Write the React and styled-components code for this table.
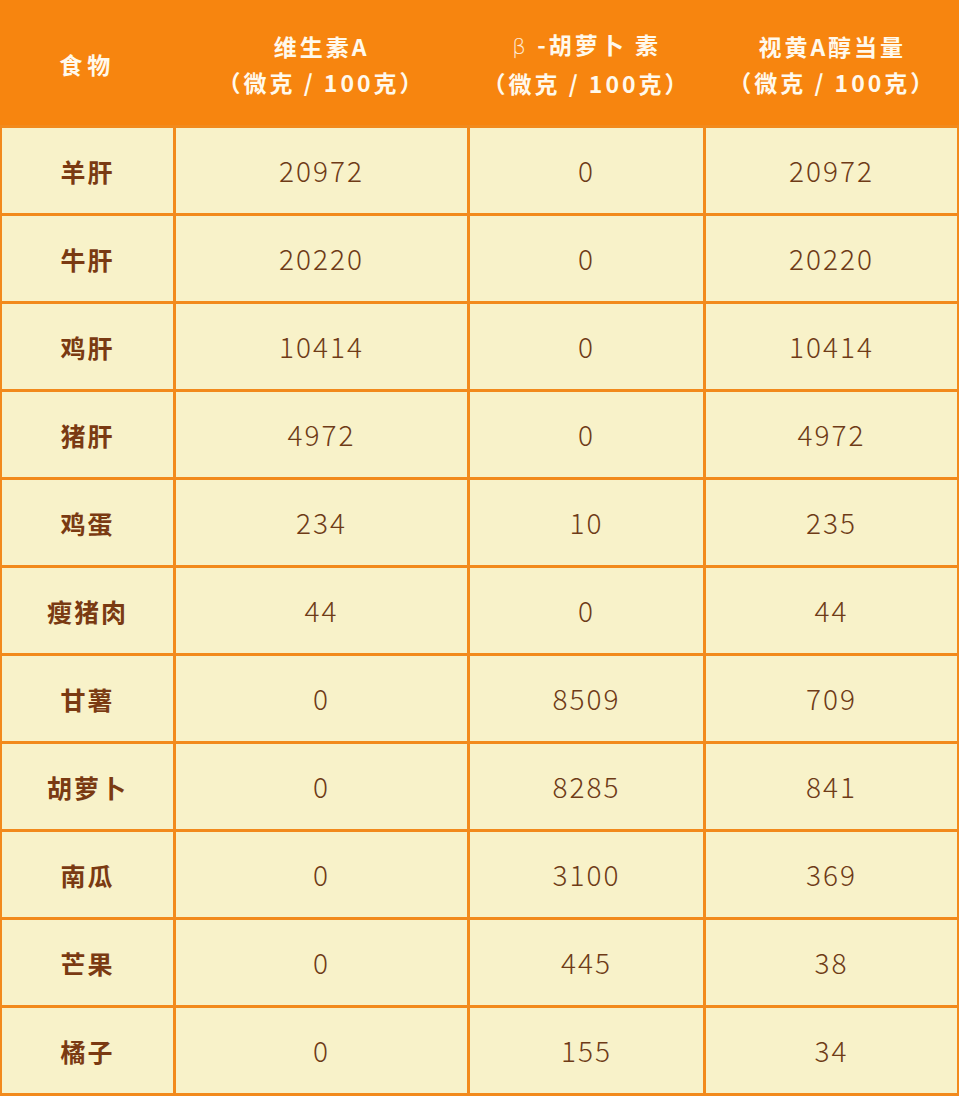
import React from "react";
import styled, { createGlobalStyle } from "styled-components";

const Global = createGlobalStyle`
  html, body { margin: 0; padding: 0; background: #f8f2c9; }
  body { font-family: "Noto Sans CJK SC", "Noto Sans", sans-serif; }
`;

const Table = styled.div`
  display: grid;
  grid-template-columns: 171px 291px 233px 251px;
  grid-template-rows: 125px repeat(11, 85px);
  column-gap: 3px;
  row-gap: 3px;
  padding: 0 3px 3px 2px;
  width: 959px;
  height: 1096px;
  box-sizing: border-box;
  background: #f28a1c;
`;

const HeaderCell = styled.div`
  background: #f7850f;
  color: #fff9ec;
  display: flex;
  flex-direction: column;
  align-items: center;
  justify-content: center;
  font-size: 23px;
  font-weight: 700;
  line-height: 36px;
  letter-spacing: ${(p) => (p.$wide ? "5px" : "3px")};
  margin: 0 ${(p) => (p.$edge ? "-3px" : "-1.5px")} 0 ${(p) => (p.$first ? "-2px" : "-1.5px")};
  padding-top: 2px;
  white-space: nowrap;
`;

const Beta = styled.span`
  font-family: "DejaVu Sans", sans-serif;
  font-weight: 200;
  font-size: 22px;
  opacity: 0.9;
`;

const Cell = styled.div`
  background: #f8f2c9;
  display: flex;
  align-items: center;
  justify-content: center;
  padding-bottom: ${(p) => (p.$name ? "0" : "2px")};
  color: ${(p) => (p.$name ? "#7a3a12" : "#6e3b17")};
  font-size: ${(p) => (p.$name ? "25px" : "28px")};
  font-weight: ${(p) => (p.$name ? 700 : 300)};
  letter-spacing: ${(p) => (p.$name ? "2px" : "2px")};
`;

const rows = [
  ["羊肝", "20972", "0", "20972"],
  ["牛肝", "20220", "0", "20220"],
  ["鸡肝", "10414", "0", "10414"],
  ["猪肝", "4972", "0", "4972"],
  ["鸡蛋", "234", "10", "235"],
  ["瘦猪肉", "44", "0", "44"],
  ["甘薯", "0", "8509", "709"],
  ["胡萝卜", "0", "8285", "841"],
  ["南瓜", "0", "3100", "369"],
  ["芒果", "0", "445", "38"],
  ["橘子", "0", "155", "34"],
];

export default function App() {
  return (
    <>
      <Global />
      <Table>
        <HeaderCell $first $wide>食物</HeaderCell>
        <HeaderCell>
          <span>维生素A</span>
          <span>（微克 / 100克）</span>
        </HeaderCell>
        <HeaderCell>
          <span><Beta>β</Beta> -胡萝卜 素</span>
          <span>（微克 / 100克）</span>
        </HeaderCell>
        <HeaderCell $edge>
          <span>视黄A醇当量</span>
          <span>（微克 / 100克）</span>
        </HeaderCell>
        {rows.map((r) =>
          r.map((v, i) => (
            <Cell key={r[0] + i} $name={i === 0}>
              {v}
            </Cell>
          ))
        )}
      </Table>
    </>
  );
}
